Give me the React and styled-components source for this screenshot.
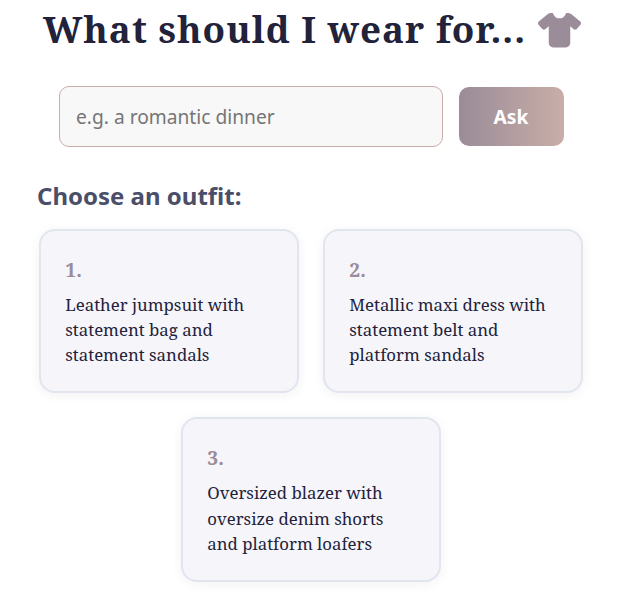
import React from "react";
import styled, { createGlobalStyle } from "styled-components";
import { FaShirt } from "react-icons/fa6";

const Global = createGlobalStyle`
  * { box-sizing: border-box; }
  body { margin: 0; background: #fff; overflow: hidden; }
`;
const serif = `"Noto Serif", "Droid Serif", "DejaVu Serif", serif`;
const Page = styled.main`
  width: 624px; height: 604px; overflow: hidden;
  display: flex; flex-direction: column;
  font-family: "Noto Sans", sans-serif; color: #22223b;
`;
const Title = styled.h1`
  margin: 0 0 0 43px; height: 58px; display: flex; align-items: center; gap: 12px;
  font: 700 36.8px/58px ${serif}; letter-spacing: 1px; white-space: nowrap;
`;
const Shirt = styled(FaShirt)` color: #9a8c98; width: 43px; height: 34.4px; flex: none; margin-top: 3px; `;
const Form = styled.form`
  margin: 28px 0 0 59px; display: flex; align-items: center; gap: 16px;
`;
const Input = styled.input`
  width: 384px; height: 61px; padding: 0 16px; border: 1px solid #c9ada7; border-radius: 10px;
  background: #f8f8f8; font: 400 19.2px "Noto Sans", sans-serif; color: #22223b;
  &::placeholder { color: #757575; }
`;
const Ask = styled.button`
  width: 105px; height: 59px; padding: 0 1px 0 0; border: 0; border-radius: 10px;
  background: linear-gradient(90deg, #9a8c98, #c9ada7); color: #fff;
  font: 700 19.2px "Noto Sans", sans-serif;
`;
const Heading = styled.h2`
  margin: 32px 0 0 37px; height: 34px; font: 700 24px/34px "Noto Sans", sans-serif; color: #4a4e69;
`;
const Cards = styled.div`
  margin: 16.05px 0 0 -1.4px; display: flex; flex-wrap: wrap; justify-content: center; gap: 24px;
`;
const Card = styled.article`
  width: 260px; height: 164.4px; padding: 24px; border: 2px solid #e0e5ee; border-radius: 16px;
  background: #f6f5fa; box-shadow: 0 2px 12px rgba(34,34,59,.06);
  font: 400 16.8px/25.2px ${serif};
`;
const Number = styled.div` font: 700 19.2px/30px ${serif}; color: #9a8c98; margin-bottom: 7px; `;
const Line = styled.div` white-space: nowrap; `;
const outfits = [
  ["Leather jumpsuit with", "statement bag and", "statement sandals"],
  ["Metallic maxi dress with", "statement belt and", "platform sandals"],
  ["Oversized blazer with", "oversize denim shorts", "and platform loafers"],
];
export default function App() {
  return (
    <Page>
      <Global />
      <Title>What should I wear for... <Shirt /></Title>
      <Form><Input placeholder="e.g. a romantic dinner" /><Ask type="button">Ask</Ask></Form>
      <Heading>Choose an outfit:</Heading>
      <Cards>
        {outfits.map((lines, i) => (
          <Card key={i}><Number>{i + 1}.</Number>{lines.map(l => <Line key={l}>{l}</Line>)}</Card>
        ))}
      </Cards>
    </Page>
  );
}
